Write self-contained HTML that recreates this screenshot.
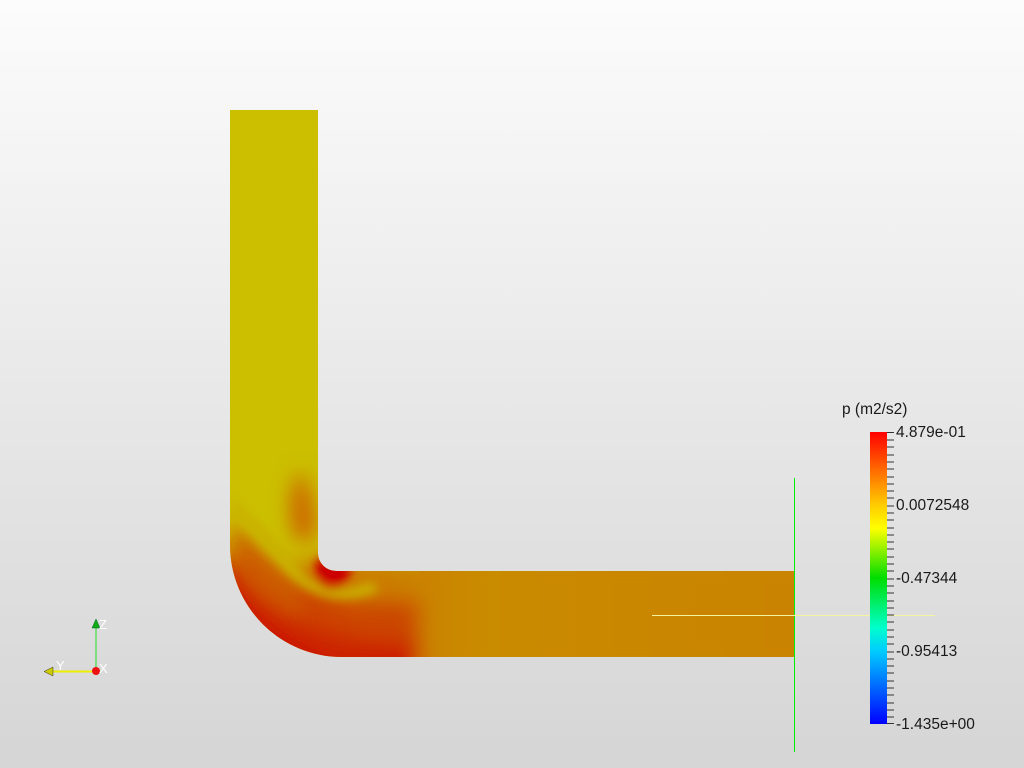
<!DOCTYPE html>
<html><head><style>
html,body{margin:0;padding:0;width:1024px;height:768px;overflow:hidden;background:linear-gradient(#fcfcfc,#d5d5d5);font-family:"Liberation Sans","DejaVu Sans",sans-serif;}
</style></head><body>
<svg width="1024" height="768" viewBox="0 0 1024 768" xmlns="http://www.w3.org/2000/svg" style="position:absolute;left:0;top:0">
<defs>
<clipPath id="pipe"><path d="M230 110 H318 V553 A18 18 0 0 0 336 571 H794 V657 H342 A112 112 0 0 1 230 545 Z"/></clipPath>
<filter id="b8" x="-50%" y="-50%" width="200%" height="200%"><feGaussianBlur stdDeviation="10"/></filter>
<filter id="b4" x="-50%" y="-50%" width="200%" height="200%"><feGaussianBlur stdDeviation="5"/></filter>
<linearGradient id="hz" x1="0" x2="1" y1="0" y2="0"><stop offset="0" stop-color="#cc7000"/><stop offset="0.35" stop-color="#c98b00"/><stop offset="1" stop-color="#c98200"/></linearGradient>
<linearGradient id="cb" x1="0" x2="0" y1="0" y2="1"><stop offset="0" stop-color="#ff0000"/><stop offset="0.25" stop-color="#ffcc00"/><stop offset="0.33" stop-color="#ffff00"/><stop offset="0.5" stop-color="#00dd00"/><stop offset="0.67" stop-color="#00ffcc"/><stop offset="0.75" stop-color="#00ccff"/><stop offset="1" stop-color="#0000ff"/></linearGradient>
</defs>
<g clip-path="url(#pipe)">
<rect x="0" y="0" width="1024" height="768" fill="#cbbf00"/>
<rect x="420" y="565" width="400" height="100" fill="#c98800"/>
<g filter="url(#b8)">
<rect x="300" y="560" width="520" height="110" fill="url(#hz)"/>
<path d="M200 520 Q240 600 300 620 Q350 640 420 640 L420 700 L200 700 Z" fill="#cc1500"/>
<path d="M200 560 Q260 640 330 650 L400 650 L400 700 L200 700 Z" fill="#cc0a00"/>
<path d="M300 470 Q318 500 314 540 L296 540 Q284 500 300 470 Z" fill="#cc6000"/>
<path d="M232 520 Q290 580 350 600 L420 600 L420 660 L330 660 Q260 630 232 580 Z" fill="#cc3000" opacity="0.7"/>
</g>
<g filter="url(#b4)">
<path d="M232 495 Q275 540 300 570 Q330 600 370 582 L380 590 Q330 612 292 578 Q262 545 232 515 Z" fill="#c9b400"/>
<circle cx="332" cy="572" r="18" fill="#cc0000"/>
</g>
</g>
<line x1="794.5" y1="478" x2="794.5" y2="752" stroke="#00ee00" stroke-width="1"/>
<line x1="652" y1="615.5" x2="935" y2="615.5" stroke="#f4f4a0" stroke-width="1"/>
<rect x="870" y="432" width="17" height="292" fill="url(#cb)"/>
<g stroke="#333" stroke-width="1">
<path d="M887 432.5h7M887 440h7M887 447h7M887 455h7M887 462h7M887 469h7M887 477h7M887 484h7M887 491h7M887 498h7M887 506h7M887 513h7M887 520h7M887 528h7M887 535h7M887 542h7M887 549h7M887 557h7M887 564h7M887 571h7M887 579h7M887 586h7M887 593h7M887 601h7M887 608h7M887 615h7M887 622h7M887 630h7M887 637h7M887 644h7M887 652h7M887 659h7M887 666h7M887 673h7M887 681h7M887 688h7M887 695h7M887 703h7M887 710h7M887 717h7M887 723.5h7"/>
</g>
<g font-size="15.5" fill="#1a1a1a">
<text x="842" y="414">p (m2/s2)</text>
<text x="896" y="437">4.879e-01</text>
<text x="896" y="510">0.0072548</text>
<text x="896" y="583">-0.47344</text>
<text x="896" y="656">-0.95413</text>
<text x="896" y="729">-1.435e+00</text>
</g>
<line x1="96" y1="628" x2="96" y2="671" stroke="#22dd22" stroke-width="1"/>
<line x1="52" y1="671.5" x2="96" y2="671.5" stroke="#eeee00" stroke-width="2"/>
<path d="M96 619 L92 628 L100 628 Z" fill="#11aa11" stroke="#063" stroke-width="0.5"/>
<path d="M44 671.5 L53 667 L53 676 Z" fill="#cccc00" stroke="#333" stroke-width="0.5"/>
<circle cx="96" cy="671" r="4" fill="#ee1111"/>
<g font-size="13" fill="#fff"><text x="99" y="629">Z</text><text x="56" y="670">Y</text><text x="99" y="673">X</text></g>
</svg>
</body></html>
